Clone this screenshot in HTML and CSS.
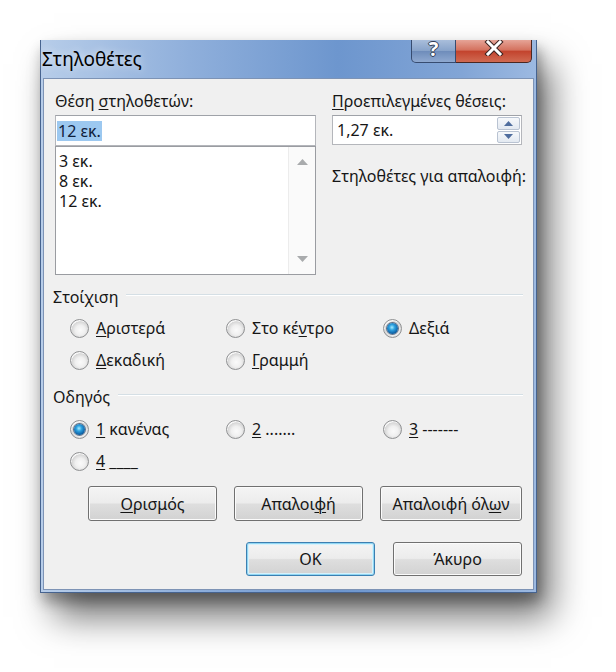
FILE: index.html
```html
<!DOCTYPE html>
<html lang="el">
<head>
    <meta charset="UTF-8">
    <title>Στηλοθέτες</title>
    <link rel="stylesheet" href="styles.css">
</head>
<body>
    <div class="window">
        <!-- Γραμμή τίτλου -->
        <div class="titlebar">
            <span class="title">Στηλοθέτες</span>
            <div class="caption-buttons">
                <span class="cap-btn help">?</span>
                <span class="cap-btn close">
                    <svg width="20" height="16" viewBox="0 0 20 16">
                        <path d="M4 2 L16 14 M16 2 L4 14" stroke="#3b2320" stroke-width="5" stroke-linecap="square"/>
                        <path d="M4 2 L16 14 M16 2 L4 14" stroke="#ffffff" stroke-width="3" stroke-linecap="square"/>
                    </svg>
                </span>
            </div>
        </div>

        <div class="client">
            <!-- Θέσεις στηλοθετών -->
            <div class="top">
                <div class="col-left">
                    <div class="label">Θέση <u>σ</u>τηλοθετών:</div>
                    <div class="textbox"><span class="selected">12 εκ.</span></div>
                    <div class="listbox">
                        <div class="items">
                            <div>3 εκ.</div>
                            <div>8 εκ.</div>
                            <div>12 εκ.</div>
                        </div>
                        <div class="scrollbar">
                            <svg width="11" height="6" viewBox="0 0 11 6"><path d="M0 6 L5.5 0 L11 6Z" fill="#a9abad"/></svg>
                            <svg width="11" height="6" viewBox="0 0 11 6"><path d="M0 0 L5.5 6 L11 0Z" fill="#a9abad"/></svg>
                        </div>
                    </div>
                </div>
                <div class="col-right">
                    <div class="label"><u>Π</u>ροεπιλεγμένες θέσεις:</div>
                    <div class="spinbox">
                        <span>1,27 εκ.</span>
                        <div class="spin">
                            <span class="spin-btn"><svg width="9" height="5" viewBox="0 0 9 5"><path d="M0 5 L4.5 0 L9 5Z" fill="#4f6d9e"/></svg></span>
                            <span class="spin-btn"><svg width="9" height="5" viewBox="0 0 9 5"><path d="M0 0 L4.5 5 L9 0Z" fill="#4f6d9e"/></svg></span>
                        </div>
                    </div>
                    <div class="label clear-label">Στηλοθέτες για απαλοιφή:</div>
                </div>
            </div>

            <!-- Στοίχιση -->
            <div class="group-title first"><span>Στοίχιση</span></div>
            <div class="radios">
                <div class="option"><span class="radio"></span><span><u>Α</u>ριστερά</span></div>
                <div class="option"><span class="radio"></span><span>Στο κέ<u>ν</u>τρο</span></div>
                <div class="option"><span class="radio checked"></span><span>Δεξιά</span></div>
                <div class="option"><span class="radio"></span><span><u>Δ</u>εκαδική</span></div>
                <div class="option"><span class="radio"></span><span><u>Γ</u>ραμμή</span></div>
            </div>

            <!-- Οδηγός -->
            <div class="group-title"><span>Οδηγός</span></div>
            <div class="radios leader">
                <div class="option"><span class="radio checked"></span><span><u>1</u> κανένας</span></div>
                <div class="option"><span class="radio"></span><span><u>2</u> .......</span></div>
                <div class="option"><span class="radio"></span><span><u>3</u> -------</span></div>
                <div class="option"><span class="radio"></span><span><u>4</u> ____</span></div>
            </div>

            <!-- Κουμπιά -->
            <div class="button-row">
                <span class="btn"><span><u>Ο</u>ρισμός</span></span>
                <span class="btn"><span>Απαλοι<u>φ</u>ή</span></span>
                <span class="btn wide"><span>Απαλοιφή όλ<u>ω</u>ν</span></span>
            </div>
            <div class="button-row dialog">
                <span class="btn default">OK</span>
                <span class="btn">Άκυρο</span>
            </div>
        </div>
    </div>
</body>
</html>
```

FILE: styles.css
```css
html, body {
    height: 100%;
}
body {
    margin: 0;
    min-height: 672px;
    padding-top: 40px;
    box-sizing: border-box;
    background-color: #ffffff;
    font-family: "Noto Sans", "Open Sans", sans-serif;
    font-size: 16px;
    color: #161616;
}
u {
    text-decoration-thickness: 1px;
    text-underline-offset: 2px;
}
.window {
    box-sizing: border-box;
    width: 497px;
    height: 553px;
    margin-left: 40px;
    padding: 0 2px 2px 2px;
    display: flex;
    flex-direction: column;
    border: 1px solid #46638f;
    border-top: none;
    background: linear-gradient(to right, #b7cde9 0%, #8fafdb 30%, #6d96ce 60%, #82a5d6 85%, #9cb9e1 100%);
    box-shadow: 14px 24px 34px rgba(0, 0, 0, 0.55), 4px 8px 12px rgba(0, 0, 0, 0.25), -2px 10px 14px rgba(0, 0, 0, 0.08);
}
.titlebar {
    height: 38px;
    display: flex;
    align-items: center;
    margin-left: -1px;
}
.title {
    font-size: 19px;
    color: #000;
    text-shadow: 0 0 8px rgba(255, 255, 255, 0.8);
}
.caption-buttons {
    margin-left: auto;
    margin-right: 2px;
    align-self: flex-start;
    display: flex;
}
.cap-btn {
    box-sizing: border-box;
    height: 23px;
    display: flex;
    align-items: center;
    justify-content: center;
    padding-bottom: 6px;
}
.help {
    width: 45px;
    border: 1px solid #374c70;
    border-top: none;
    border-radius: 0 0 0 5px;
    background: linear-gradient(#a9bedb, #87a2c9 50%, #6f8dbb 52%, #8fa9d0);
    color: #fff;
    font-weight: bold;
    font-size: 20px;
    line-height: 17px;
    text-shadow: 1px 0 0 #2f3c55, -1px 0 0 #2f3c55, 0 1px 0 #2f3c55, 0 -1px 0 #2f3c55;
}
.close {
    width: 76px;
    border: 1px solid #4a2722;
    border-top: none;
    border-left: none;
    border-radius: 0 0 5px 0;
    background: linear-gradient(#e6a497, #d4725f 45%, #c3442e 52%, #d06a52);
}
.client {
    flex: 1;
    box-sizing: border-box;
    padding: 12px 11px 0 11px;
    background-color: #f0f0f0;
    border: 1px solid #7d93b5;
}
.top {
    display: flex;
    gap: 16px;
}
.col-left {
    width: 261px;
}
.col-right {
    width: 190px;
}
.label {
    line-height: 20px;
    white-space: nowrap;
}
.textbox {
    box-sizing: border-box;
    height: 31px;
    margin-top: 4px;
    padding: 4px 1px;
    background-color: #fff;
    border: 1px solid #b4b6bb;
    border-top-color: #9fa2a8;
}
.selected {
    display: inline-block;
    line-height: 20px;
    padding: 0 1px;
    background-color: #9cc8f0;
    color: #10203a;
}
.listbox {
    box-sizing: border-box;
    height: 129px;
    display: flex;
    background-color: #fff;
    border: 1px solid #9a9ca1;
}
.items {
    flex: 1;
    padding: 4px 3px;
    line-height: 20px;
}
.scrollbar {
    width: 26px;
    display: flex;
    flex-direction: column;
    justify-content: space-between;
    align-items: center;
    padding: 12px 0 12px;
    background-color: #fafafa;
    border-left: 1px solid #ececec;
}
.spinbox {
    box-sizing: border-box;
    height: 30px;
    margin-top: 4px;
    padding-left: 4px;
    display: flex;
    align-items: center;
    background-color: #fff;
    border: 1px solid #b4b6bb;
    border-top-color: #9fa2a8;
}
.spin {
    margin-left: auto;
    width: 25px;
    height: 100%;
    box-sizing: border-box;
    padding: 1px;
    display: flex;
    flex-direction: column;
    gap: 1px;
}
.spin-btn {
    flex: 1;
    display: flex;
    align-items: center;
    justify-content: center;
    border: 1px solid #b9c3d2;
    border-radius: 2px;
    background: linear-gradient(#f6f8fb, #e3e9f1);
}
.clear-label {
    margin-top: 21px;
}
.group-title {
    display: flex;
    align-items: flex-start;
    line-height: 20px;
    margin: 11px -1px 0 -2px;
}
.group-title.first {
    margin-top: 12px;
}
.group-title::after {
    content: "";
    flex: 1;
    margin: 7px 0 0 8px;
    border-top: 1px solid #d5dfe5;
    border-bottom: 1px solid #fff;
}
.radios {
    display: grid;
    grid-template-columns: 156px 157px 1fr;
    grid-auto-rows: 32px;
    align-items: center;
    margin-top: 5px;
    padding-left: 15px;
}
.radios.leader {
    margin-top: 6px;
}
.option {
    display: flex;
    align-items: center;
    gap: 7px;
    white-space: nowrap;
}
.radio {
    position: relative;
    box-sizing: border-box;
    width: 19px;
    height: 19px;
    border-radius: 50%;
    border: 1px solid #8f9092;
    background: radial-gradient(circle at 55% 60%, #fafafa 0%, #f0f0f0 35%, #d6d6d6 62%, #f6f6f6 66%, #ffffff 100%);
}
.radio.checked::after {
    content: "";
    position: absolute;
    left: 3px;
    top: 3px;
    width: 11px;
    height: 11px;
    border-radius: 50%;
    background: radial-gradient(circle at 45% 40%, #a6ecff 0%, #2fa3e0 30%, #126aae 62%, #0a3563 100%);
    box-shadow: 0 0 0 1px rgba(10, 40, 80, 0.6);
}
.button-row {
    display: flex;
    justify-content: flex-end;
    gap: 17px;
    margin-top: 9px;
}
.button-row.dialog {
    gap: 18px;
    margin-top: 21px;
}
.btn {
    box-sizing: border-box;
    width: 129px;
    height: 35px;
    display: flex;
    align-items: center;
    justify-content: center;
    border: 1px solid #707070;
    border-radius: 3px;
    background: linear-gradient(#f4f4f4 0%, #ececec 48%, #dedede 52%, #d2d2d2 100%);
    box-shadow: inset 0 0 0 1px #fbfbfb;
    color: #151515;
}
.button-row.dialog .btn {
    height: 34px;
}
.btn.wide {
    width: 142px;
}
.btn.default {
    border-color: #3c7fb1;
    box-shadow: inset 0 0 0 1px #8fd6f3, inset 0 0 0 2px #d7f1fb;
}
```
